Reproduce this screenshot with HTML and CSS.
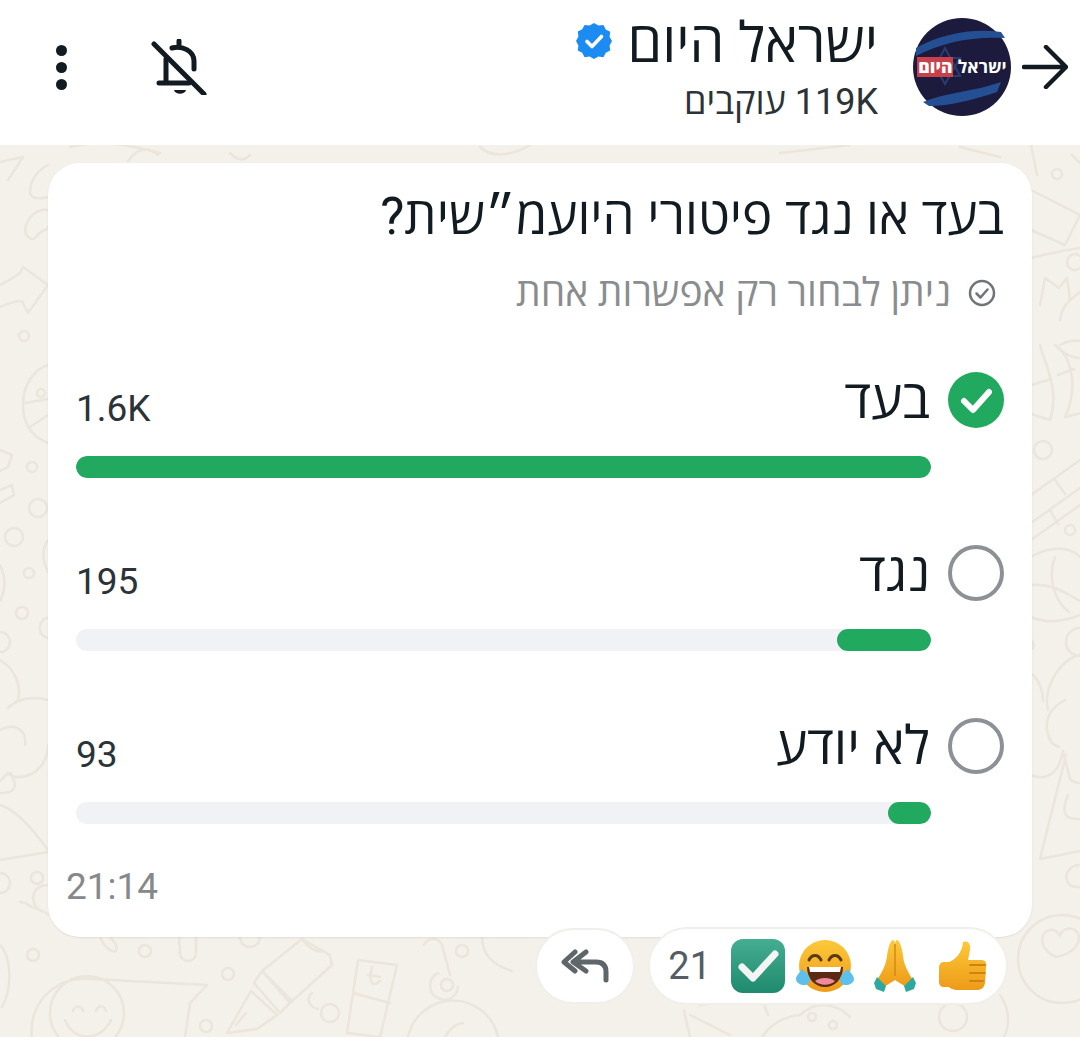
FILE: index.html
```html
<!DOCTYPE html>
<html lang="he" dir="rtl">
<head>
    <title>ישראל היום</title>
    <link rel="stylesheet" href="styles.css">
</head>
<body>
    <header class="topbar">
        <svg class="back" viewBox="0 0 46 44"><path d="M2 22H43M24 2l20 20-20 20"/></svg>
        <div class="avatar">
            <svg class="avatar-bg" viewBox="0 0 98 98">
                <circle cx="49" cy="49" r="49" fill="#1c1b3d"/>
                <path d="M3 30C28 16 60 10 88 14L92 20C60 18 30 24 3 38Z" fill="#244f92"/>
                <path d="M10 84C34 74 60 74 88 64L84 74C60 82 36 88 16 88Z" fill="#244f92"/>
                <path d="M32 30L47 58H17ZM32 66L17 40H47Z" fill="none" stroke="#283c70" stroke-width="2"/>
            </svg>
            <span class="avatar-name">ישראל <b>היום</b></span>
        </div>
        <div class="channel">
            <div class="channel-name">ישראל היום
                <svg class="verified" viewBox="0 0 36 36">
                    <path fill="#1d8cf2" d="M18 0l4.400 2.600 5-.6 2.400 4.400 4.400 2.400-.6 5L36 18l-2.400 4.400.6 5-4.400 2.400-2.400 4.400-5-.6L18 36l-4.400-2.400-5 .6-2.400-4.400-4.400-2.400.6-5L0 18l2.400-4.400-.6-5 4.400-2.400L8.600 2l5 .6z"/>
                    <path fill="none" stroke="#fff" stroke-width="3.600" stroke-linecap="round" stroke-linejoin="round" d="M11 18.500l5 5 9.500-10"/>
                </svg>
            </div>
            <div class="channel-subs"><span dir="ltr">119K</span> עוקבים</div>
        </div>
        <svg class="bell" viewBox="0 0 56 56">
            <path d="M28 2v5M21 9c10-3 22 3 22 13v8M15 20v23M8 44h30"/>
            <path class="bell-clapper" d="M23 51h12c-1 5-11 5-12 0z"/>
            <path d="M3 5l50 50"/>
        </svg>
        <div class="dots"><i></i><i></i><i></i></div>
    </header>

    <main class="chat">
        <!-- wallpaper doodles, only the parts that show around the bubble -->
        <svg class="doodles" viewBox="0 0 1080 892">
            <path d="M0 17L23 12L8 35M48 20c-10 5-18 15-18 27 0 5 5 8 18 5M48 65c-10-2-18 5-22 15-3 10 5 18 10 12 5-8 10-5 12-10M0 140c10-5 15-8 20-12l3-6 25 18-20 28-6-12c-8 0-15 3-22 6"/>
            <circle cx="24" cy="191" r="5"/>
            <path d="M48 220c-14 4-25 20-25 40s10 32 25 38M25 258l23-4M30 282l18-12M0 305l12 5-4 12-8 4M0 345l12-5 2 10-14 8"/>
            <circle cx="41" cy="248" r="4"/><circle cx="32" cy="322" r="5"/><circle cx="38" cy="363" r="9"/><circle cx="14" cy="392" r="9"/>
            <circle cx="29" cy="428" r="5"/><circle cx="22" cy="468" r="6"/><circle cx="0" cy="497" r="10"/>
            <path d="M48 395c-6 8-6 20 0 32M48 473c-10 0-12 18 0 20M0 420c6 12 6 24 0 36M0 515c14 8 22 25 18 40l-10 8M8 563c10-10 25-12 40-8M0 585c15-8 27 0 25 15M48 600c0 15-10 32-30 32-6 0-10-4-10-4l-8 8M0 648c10 0 15-2 15-10l-4-10M0 660c14 4 30 20 48 45M0 715l48-8M20 757c10 0 10 8 18 6M48 740c-14 0-18 12-12 22 3 6 8 2 12 8"/>
            <circle cx="37" cy="733" r="6"/><circle cx="0" cy="738" r="10"/>

            <circle cx="1057" cy="29" r="5"/>
            <path d="M1031 0l6 30M1072 10l8 8M1031 45l49 25-15 30-34-15M1031 113c20-5 35-8 49-10M1040 160l5-27 14 10 8-10 3 22M1060 175c2-15 10-20 20-28M1040 200c5 20 20 45 10 75l-19-6M1055 200c15 10 25 40 10 72l16-4M1060 200c10-5 15-5 20-4M1060 205c8 6 14 8 20 8M1031 240l20-6M1058 230l16-6"/>
            <circle cx="1075" cy="117" r="8"/><circle cx="1043" cy="305" r="9"/>
            <path d="M1031 350l49-35M1031 378l49-35M1031 395l49-35M1055 335l10 14M1050 365l8 14"/>
            <circle cx="1070" cy="385" r="5"/>
            <path d="M1031 412c20-12 40-10 49 0M1031 440c20-2 35 8 49 16M1055 412c-8 20 0 45 14 55M1031 472c14 6 30 6 49-2"/>
            <circle cx="1080" cy="497" r="14"/>
            <path d="M1031 495a6 6 0 0 1 0 10M1033 530c6 6 10 14 10 26M1080 510c-22 5-37 35-32 55M1065 555c-10 5-20 15-18 30 2 10 5 15 12 17M1031 630c14 6 28 0 32-24l7 28c4 4 8 4 10 4M1066 610l-26 104 40-8M1068 650c-6 15-6 25 12 24M1080 720c-12 0-18 12-10 20 2 2 6 2 10 2"/>
            <circle cx="1062" cy="814" r="44"/>
            <path d="M1056 812c-14-6-18-20-9-26 6-3 11 0 13 5 2-8 12-10 17-4 6 8-2 22-21 25z"/>

            <circle cx="87" cy="868" r="37"/>
            <path d="M73 866c2-6 8-6 10 0M96 866c2-6 8-6 10 0M65 875c8 22 36 22 46 0M32 892c-4-30 20-62 60-58L207 840 190 858l-5 34M0 800c10 10 14 40 2 62"/>
            <circle cx="33" cy="810" r="6"/><circle cx="145" cy="806" r="6"/><circle cx="228" cy="829" r="6"/><circle cx="206" cy="881" r="6"/><circle cx="330" cy="868" r="9"/><circle cx="462" cy="806" r="6"/>
            <path d="M100 792c4 10 12 16 16 14 2-4-2-10-6-14M180 792a14 14 0 0 0 0 10v6a8 8 0 0 0 16 0v-16M240 792a10 10 0 0 0 20 0"/>
            <path d="M262 826l40-32 28 16 2 10-42 38zM254 838l8-12 30 30-12 12zM227 888l24-42 26 24-20 14zM236 880l10-12"/>
            <path d="M302 794c6 8 14 14 22 12M312 848c-6 4-4 14 6 16M358 815l39 5-17 72-33-4zM353 848l37 10M372 822c-2 8-2 14 0 16 2 2 6 0 8-2M368 830l12 2"/>
            <path d="M424 800c4-8 14-8 18 0l8 30M438 828a14 14 0 1 0 20 14M408 892a46 46 0 0 1 90 0M445 892c4-8 12-14 18-14M482 792c0 16 10 28 30 34"/>
            <circle cx="447" cy="840" r="6"/>
            <path d="M690 870l40 20M700 860l60-10 8 20M690 892l-6-26M800 870a50 50 0 0 0-38 22M850 872c-10-10-30-20-50-2M880 800c30 44 50 50 70 30M1000 850c10 14 10 30 4 42"/>
            <circle cx="812" cy="872" r="4"/><circle cx="833" cy="880" r="4"/><circle cx="953" cy="872" r="14"/>
            <path d="M70 2c30-8 60-2 90 6M128 16c10-14 20-14 30-6M230 8c8 8 14 8 20 2M480 2c10 10 30 10 50-2M780 8l70-8M960 2l40 10"/>
        </svg>

        <section class="bubble">
            <h1 class="question">בעד או נגד פיטורי היועמ״שית?</h1>
            <div class="hint">
                <svg class="hint-icon" viewBox="0 0 28 28"><circle cx="14" cy="14" r="12"/><path d="M8.500 14.500l4 4 7-8"/></svg>
                ניתן לבחור רק אפשרות אחת
            </div>

            <div class="option">
                <div class="option-head">
                    <svg class="radio" viewBox="0 0 56 56"><circle cx="28" cy="28" r="28" fill="#21a95f"/><path d="M16 29l9 9 16-18" fill="none" stroke="#fff" stroke-width="6" stroke-linecap="round" stroke-linejoin="round"/></svg>
                    <span class="option-label">בעד</span>
                    <span class="option-count">1.6K</span>
                </div>
                <div class="track"><div class="fill" style="width: 100%"></div></div>
            </div>
            <div class="option">
                <div class="option-head">
                    <svg class="radio" viewBox="0 0 56 56"><circle cx="28" cy="28" r="26" fill="none" stroke="#8c9196" stroke-width="4"/></svg>
                    <span class="option-label">נגד</span>
                    <span class="option-count">195</span>
                </div>
                <div class="track"><div class="fill" style="width: 11%"></div></div>
            </div>
            <div class="option">
                <div class="option-head">
                    <svg class="radio" viewBox="0 0 56 56"><circle cx="28" cy="28" r="26" fill="none" stroke="#8c9196" stroke-width="4"/></svg>
                    <span class="option-label">לא יודע</span>
                    <span class="option-count">93</span>
                </div>
                <div class="track"><div class="fill" style="width: 5%"></div></div>
            </div>

            <div class="time">21:14</div>
        </section>

        <div class="reactions-row">
            <div class="pill reactions">
                <svg class="emoji thumb" viewBox="0 0 50 50">
                    <defs>
                        <linearGradient id="yellow" x1="0" y1="0" x2="0" y2="1"><stop offset="0" stop-color="#fcc93a"/><stop offset="1" stop-color="#ee9a18"/></linearGradient>
                    </defs>
                    <path fill="url(#yellow)" d="M25 1c5-2 8 2 7 8l-2 10h13c5 0 6 4 5 7l-1 16c-1 5-4 7-8 7H20c-5 0-8-2-9-3H6c-3 0-5-2-5-5V27c0-4 2-6 5-6h5c7-3 13-9 14-20z"/>
                    <path fill="none" stroke="#cf8412" stroke-width="1.800" stroke-linecap="round" d="M32 24h15M32 32h15M32 40h13"/>
                </svg>
                <svg class="emoji pray" viewBox="0 0 42 52">
                    <path fill="url(#yellow)" d="M19 0c1 0 2 2 2 4 0-2 1-4 2-4 3 1 5 8 6 16 1 9 5 16 10 24l-7 7-11-7-11 7-7-7c5-8 9-15 10-24 1-8 3-15 6-16z"/>
                    <path fill="none" stroke="#d08a17" stroke-width="1.500" d="M21 4v32"/>
                    <path fill="#2fa8a0" d="M3 37l9 9-2 6-8-3-2-6zM39 37l-9 9 2 6 8-3 2-6z"/>
                </svg>
                <svg class="emoji joy" viewBox="0 0 58 54">
                    <circle cx="29" cy="27" r="26" fill="url(#yellow)"/>
                    <path fill="none" stroke="#5b3a12" stroke-width="3" stroke-linecap="round" d="M13 21c3-6 9-6 12 0M33 21c3-6 9-6 12 0"/>
                    <path fill="#5b2a12" d="M11 28h36c0 12-8 20-18 20s-18-8-18-20z"/>
                    <path fill="#fff" d="M13 28h32l-1 5H14z"/>
                    <path fill="#f08a9a" d="M19 42c5-4 15-4 20 0-5 5-15 5-20 0z"/>
                    <path fill="#5cc0ea" d="M6 30c4 3 8 7 8 11 0 3-3 5-6 5s-8-2-8-6c0-3 4-7 6-10zM52 30c-4 3-8 7-8 11 0 3 3 5 6 5s8-2 8-6c0-3-4-7-6-10z"/>
                </svg>
                <svg class="emoji check-emoji" viewBox="0 0 54 54">
                    <defs>
                        <linearGradient id="teal" x1="0" y1="0" x2="0" y2="1"><stop offset="0" stop-color="#45ad92"/><stop offset="1" stop-color="#1f8a6d"/></linearGradient>
                    </defs>
                    <rect width="54" height="54" rx="12" fill="url(#teal)"/>
                    <path d="M11 28l11 11 22-24" fill="none" stroke="#f2f5f3" stroke-width="7" stroke-linecap="round" stroke-linejoin="round"/>
                </svg>
                <span class="reaction-count">21</span>
            </div>
            <div class="pill reply">
                <svg viewBox="0 0 48 34"><path d="M14 3L3 13l11 9M25 3L12 13l13 9M13 13h22c7 0 10 4 10 10v8"/></svg>
            </div>
        </div>
    </main>
</body>
</html>
```

FILE: styles.css
```css
* {
    box-sizing: border-box;
}
html, body {
    height: 100%;
}
body {
    margin: 0;
    font-family: Roboto, "Open Sans", "Liberation Sans", sans-serif;
    color: #111b21;
    background-color: #f4f1eb;
    overflow: hidden;
}
.topbar {
    height: 145px;
    background-color: white;
    display: flex;
    align-items: center;
    padding: 0 12px 11px 0;
}
.back {
    width: 46px;
    height: 44px;
    fill: none;
    stroke: #111b21;
    stroke-width: 4.500px;
    stroke-linecap: round;
    stroke-linejoin: round;
}
.avatar {
    position: relative;
    width: 98px;
    height: 98px;
    margin: 0 11px 0 35px;
    flex-shrink: 0;
}
.avatar-bg {
    display: block;
}
.avatar-name {
    position: absolute;
    top: 36px;
    left: 3px;
    right: 3px;
    text-align: center;
    color: white;
    font-size: 17.500px;
    font-weight: 700;
    white-space: nowrap;
}
.avatar-name b {
    background-color: #c9404a;
    padding: 0 1px;
}
.channel {
    flex: 1;
    padding-top: 6px;
}
.channel-name {
    display: flex;
    align-items: center;
    gap: 16px;
    margin: -4px 0 4px;
    font-size: 55.500px;
    line-height: 64px;
}
.verified {
    width: 36px;
    height: 36px;
    margin-bottom: 6px;
}
.channel-subs {
    font-size: 36px;
    line-height: 44px;
    color: #2b3338;
}
.bell {
    width: 56px;
    height: 56px;
    fill: none;
    stroke: #111b21;
    stroke-width: 5px;
    stroke-linecap: round;
    stroke-linejoin: round;
    margin-left: 84px;
}
.bell-clapper {
    fill: #111b21;
    stroke: none;
}
.dots {
    display: flex;
    flex-direction: column;
    gap: 6px;
    margin-left: 56px;
}
.dots i {
    display: block;
    width: 11px;
    height: 11px;
    border-radius: 50%;
    background-color: #111b21;
}
.chat {
    position: relative;
    height: 892px;
    padding: 18px 48px 0;
}
.doodles {
    position: absolute;
    top: 0;
    left: 0;
    width: 1080px;
    height: 892px;
    fill: none;
    stroke: #ebe5db;
    stroke-width: 2.500px;
    stroke-linecap: round;
    stroke-linejoin: round;
}
.bubble {
    position: relative;
    height: 774px;
    background-color: white;
    border-radius: 32px;
    padding: 24px 28px 0 28px;
    box-shadow: 0 1px 2px rgba(0, 0, 0, 0.08);
}
.question {
    margin: 0;
    font-size: 51px;
    font-weight: 400;
    line-height: 60px;
}
.hint {
    display: flex;
    align-items: center;
    gap: 17px;
    margin: 21px 8px 54px 0;
    font-size: 39px;
    line-height: 50px;
    color: #8a8d8f;
}
.hint-icon {
    width: 28px;
    height: 28px;
    fill: none;
    stroke: #6f7478;
    stroke-width: 2.500px;
    stroke-linecap: round;
    stroke-linejoin: round;
}
.option {
    height: 173px;
}
.option-head {
    display: flex;
    align-items: center;
    gap: 18px;
    height: 56px;
}
.radio {
    width: 56px;
    height: 56px;
}
.option-label {
    flex: 1;
    font-size: 53px;
    line-height: 56px;
}
.option-count {
    font-size: 37px;
    line-height: 56px;
    margin-top: 18px;
    color: #2b3338;
    direction: ltr;
}
.track {
    margin: 28px 73px 0 0;
    height: 22px;
    border-radius: 11px;
    background-color: #f0f2f5;
    overflow: hidden;
}
.fill {
    height: 100%;
    border-radius: 11px;
    background-color: #21a95f;
}
.time {
    position: absolute;
    left: 18px;
    bottom: 28px;
    font-size: 37px;
    line-height: 44px;
    color: #85898c;
    direction: ltr;
}
.reactions-row {
    position: relative;
    display: flex;
    align-items: center;
    gap: 13px;
    margin: -10px 24px 0 0;
}
.pill {
    display: flex;
    align-items: center;
    background-color: white;
    border-radius: 39px;
    border: 2px solid #f1efeb;
}
.reactions {
    width: 360px;
    height: 78px;
    padding: 0 18px;
    gap: 13px;
}
.emoji {
    flex-shrink: 0;
}
.thumb {
    width: 50px;
    height: 50px;
    margin-left: 9px;
}
.pray {
    width: 42px;
    height: 52px;
    margin-left: 7px;
}
.joy {
    width: 58px;
    height: 54px;
    margin-left: -2px;
}
.check-emoji {
    width: 54px;
    height: 54px;
}
.reaction-count {
    font-size: 38px;
    color: #545d63;
    direction: ltr;
    margin-right: 7px;
}
.reply {
    width: 100px;
    height: 76px;
    justify-content: center;
}
.reply svg {
    width: 48px;
    height: 34px;
    fill: none;
    stroke: #5f6669;
    stroke-width: 5px;
    stroke-linecap: round;
    stroke-linejoin: round;
}
```
